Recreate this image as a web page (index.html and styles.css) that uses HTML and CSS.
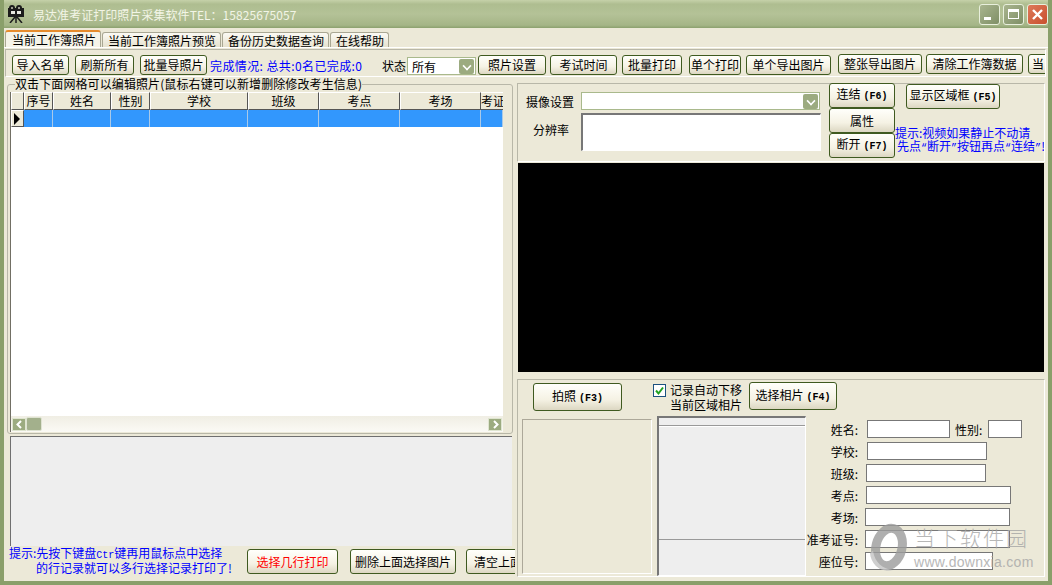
FILE: index.html
```html
<!DOCTYPE html>
<html lang="zh-CN">
<head>
    <meta charset="UTF-8">
    <title>易达准考证打印照片采集软件</title>
    <link rel="stylesheet" href="styles.css">
</head>
<body>
<div class="window">
    <div class="titlebar">
        <svg class="app-icon" width="16" height="18" viewBox="0 0 16 18">
            <rect x="0" y="3" width="16" height="9" fill="#1c1c1c"/>
            <circle cx="4" cy="3" r="3" fill="#1c1c1c"/>
            <circle cx="11" cy="3" r="3" fill="#1c1c1c"/>
            <circle cx="4" cy="3" r="1" fill="#c8c8b8"/>
            <circle cx="11" cy="3" r="1" fill="#c8c8b8"/>
            <rect x="3" y="6" width="4" height="3" fill="#e8e8e0"/>
            <rect x="9" y="6" width="4" height="3" fill="#e8e8e0"/>
            <path d="M7 12 L2 18 M8 12 V18 M9 12 L14 18" stroke="#1c1c1c" stroke-width="1.5"/>
        </svg>
        <span class="title-text">易达准考证打印照片采集软件TEL：15825675057</span>
        <div class="win-btns">
            <div class="win-btn"><span class="glyph-min"></span></div>
            <div class="win-btn"><span class="glyph-max"></span></div>
            <div class="win-btn close">
                <svg width="13" height="13" viewBox="0 0 13 13"><path d="M2 2 L11 11 M11 2 L2 11" stroke="#fff" stroke-width="2.4"/></svg>
            </div>
        </div>
    </div>

    <div class="client">
        <div class="tabs">
            <div class="tab active">当前工作簿照片</div>
            <div class="tab">当前工作簿照片预览</div>
            <div class="tab">备份历史数据查询</div>
            <div class="tab">在线帮助</div>
        </div>

        <div class="toolbar">
            <button class="btn w57">导入名单</button>
            <button class="btn w59 ml6">刷新所有</button>
            <button class="btn w67 ml6">批量导照片</button>
            <span class="status-text">完成情况: 总共:0名已完成:0</span>
            <span class="state-label">状态</span>
            <div class="combo state-combo"><span>所有</span><i class="combo-arrow"></i></div>
            <button class="btn w68 ml2">照片设置</button>
            <button class="btn w67 ml4">考试时间</button>
            <button class="btn w60 ml5">批量打印</button>
            <button class="btn w52 ml7">单个打印</button>
            <button class="btn w85 ml5">单个导出图片</button>
            <button class="btn w84 ml7 up1">整张导出图片</button>
            <button class="btn w97 ml4 up1">清除工作簿数据</button>
            <button class="btn w22 ml5 up1 clip-text">当</button>
        </div>

        <div class="main">
            <div class="left">
                <fieldset class="group">
                    <legend>双击下面网格可以编辑照片(鼠标右键可以新增删除修改考生信息)</legend>
                    <div class="grid-wrap">
                        <div class="grid-head">
                            <div></div><div>序号</div><div>姓名</div><div>性别</div><div>学校</div><div>班级</div><div>考点</div><div>考场</div><div>考证</div>
                        </div>
                        <div class="grid-row">
                            <div class="row-mark"><i></i></div><div></div><div></div><div></div><div></div><div></div><div></div><div></div><div></div>
                        </div>
                        <div class="grid-empty"></div>
                        <div class="hscroll">
                            <div class="sb-btn"><svg width="9" height="9" viewBox="0 0 9 9"><path d="M6 1 L2.5 4.5 L6 8" fill="none" stroke="#fff" stroke-width="2"/></svg></div>
                            <div class="sb-thumb"></div>
                            <div class="sb-btn"><svg width="9" height="9" viewBox="0 0 9 9"><path d="M3 1 L6.5 4.5 L3 8" fill="none" stroke="#fff" stroke-width="2"/></svg></div>
                        </div>
                    </div>
                </fieldset>
                <div class="gray-panel"></div>
                <div class="left-bottom">
                    <div class="tip-left">
                        <div>提示:先按下键盘<span class="latin">Ctr</span>键再用鼠标点中选择</div>
                        <div class="tip-indent">的行记录就可以多行选择记录打印了!</div>
                    </div>
                    <button class="btn red w91">选择几行打印</button>
                    <button class="btn w106 ml12">删除上面选择图片</button>
                    <button class="btn w106 ml10 clip-left">清空上面选择图片</button>
                </div>
            </div>

            <div class="right">
                <div class="cam-panel">
                    <div class="cam-fields">
                        <div class="cam-row">
                            <span class="cam-label">摄像设置</span>
                            <div class="combo cam-combo"><span></span><i class="combo-arrow"></i></div>
                        </div>
                        <div class="cam-row res-row">
                            <span class="cam-label res-label">分辨率</span>
                            <div class="res-list"></div>
                        </div>
                    </div>
                    <div class="cam-btns">
                        <button class="btn cam-btn">连结<span class="key">(F6)</span></button>
                        <button class="btn cam-btn">属性</button>
                        <button class="btn cam-btn">断开<span class="key">(F7)</span></button>
                    </div>
                    <div class="cam-side">
                        <button class="btn area-btn">显示区域框<span class="key">(F5)</span></button>
                        <div class="tip-right">
                            <div>提示:视频如果静止不动请</div>
                            <div class="tip-second">先点<span class="latin">“</span>断开<span class="latin">”</span>按钮再点<span class="latin">“</span>连结<span class="latin">”</span>!</div>
                        </div>
                    </div>
                </div>

                <div class="video"></div>

                <div class="shot-panel">
                    <div class="shot-top">
                        <button class="btn shot-btn">拍照<span class="key">(F3)</span></button>
                        <label class="auto-check">
                            <span class="check-box"><svg width="11" height="11" viewBox="0 0 11 11"><path d="M2 5.5 L4.5 8.5 L9 2.5" fill="none" stroke="#21a121" stroke-width="2"/></svg></span>
                            <span class="check-text">记录自动下移<br>当前区域相片</span>
                        </label>
                        <button class="btn pick-btn">选择相片<span class="key">(F4)</span></button>
                    </div>
                    <div class="shot-body">
                        <div class="preview"></div>
                        <div class="thumbs">
                            <div class="thumbs-head"></div>
                            <div class="thumbs-main"></div>
                        </div>
                        <div class="info-form">
                            <div class="form-row">
                                <span class="f-label l1">姓名:</span><span class="f-input i83"></span>
                                <span class="f-label sex">性别:</span><span class="f-input i34"></span>
                            </div>
                            <div class="form-row"><span class="f-label l1">学校:</span><span class="f-input i120"></span></div>
                            <div class="form-row"><span class="f-label l1">班级:</span><span class="f-input i120 nudge"></span></div>
                            <div class="form-row"><span class="f-label l1">考点:</span><span class="f-input i145 nudge"></span></div>
                            <div class="form-row"><span class="f-label l1">考场:</span><span class="f-input i145 nudge2"></span></div>
                            <div class="form-row"><span class="f-label l1">准考证号:</span><span class="f-input i145 nudge2"></span></div>
                            <div class="form-row"><span class="f-label l1">座位号:</span><span class="f-input i128 nudge2"></span></div>
                        </div>
                    </div>
                </div>
            </div>
        </div>
    </div>

    <div class="watermark">
        <svg class="wm-logo" width="42" height="50" viewBox="0 0 42 50">
            <ellipse cx="22" cy="24" rx="13" ry="19" fill="none" stroke="#9c9c9c" stroke-width="9" transform="rotate(14 22 24)"/>
            <path d="M3 30 C4 42 14 50 26 47 C16 46 8 40 6 28 Z" fill="#c4c4c4"/>
        </svg>
        <div class="wm-text">
            <div class="wm-cn">当下软件园</div>
            <div class="wm-url">www.downxia.com</div>
        </div>
    </div>
</div>
</body>
</html>
```

FILE: styles.css
```css
* {
    box-sizing: border-box;
}

body {
    margin: 0;
    font-family: "Noto Sans CJK SC", sans-serif;
    font-size: 12px;
    color: #000;
    overflow: hidden;
    background: #ece9d8;
}

.window {
    position: relative;
    width: 1052px;
    height: 585px;
    display: flex;
    flex-direction: column;
    background: #ece9d8;
    border: 4px solid #8a9f6a;
    border-top: 0;
    overflow: hidden;
}

/* title bar */
.titlebar {
    height: 28px;
    margin: 0 -4px;
    padding: 0 4px 0 8px;
    display: flex;
    align-items: center;
    flex: none;
    background: linear-gradient(#c5d1a9 0, #aebd90 15%, #b4c297 50%, #a5b587 90%, #8ba06e 100%);
}

.app-icon {
    flex: none;
}

.title-text {
    margin-left: 9px;
    color: #f2f5e6;
    font-size: 12px;
    letter-spacing: 0.05px;
}

.win-btns {
    margin-left: auto;
    display: flex;
    gap: 3px;
}

.win-btn {
    width: 21px;
    height: 21px;
    display: flex;
    align-items: center;
    justify-content: center;
    border: 1px solid #e8efdc;
    border-radius: 3px;
    background: linear-gradient(135deg, #a9b58f, #7f8f66);
}

.win-btn.close {
    background: linear-gradient(135deg, #dd7a5a, #c94f2e);
}

.glyph-min {
    width: 7px;
    height: 3px;
    margin-top: 9px;
    margin-right: 5px;
    background: #fff;
}

.glyph-max {
    width: 11px;
    height: 10px;
    border: 1px solid #fff;
    border-top-width: 3px;
}

.client {
    flex: 1;
    min-height: 0;
    display: flex;
    flex-direction: column;
    padding-bottom: 3px;
}

/* tabs */
.tabs {
    height: 20px;
    padding: 4px 0 0 1px;
    display: flex;
    align-items: flex-end;
    flex: none;
    border-bottom: 1px solid #fff;
}

.tab {
    height: 15px;
    padding: 0 4px 0 5px;
    margin-right: 1px;
    display: flex;
    align-items: center;
    line-height: 15px;
    white-space: nowrap;
    background: linear-gradient(#fbfaf4, #e6e2cf);
    border: 1px solid #a9a793;
    border-bottom: 0;
    border-radius: 3px 3px 0 0;
}

.tab.active {
    height: 17px;
    padding: 0 4px 0 6px;
    background: #f5f3e8;
    border-top: 2px solid #e68b2c;
}

/* toolbar */
.toolbar {
    height: 28px;
    margin: 1px 2px 0 1px;
    padding: 5px 0 0 6px;
    display: flex;
    align-items: flex-start;
    flex: none;
    border: 1px solid #b8b7a8;
    border-right-color: #fff;
    border-bottom-color: #fff;
    white-space: nowrap;
    overflow: hidden;
}

.btn {
    height: 20px;
    padding: 0;
    flex: none;
    font-family: inherit;
    font-size: 12px;
    line-height: 16px;
    color: #000;
    white-space: nowrap;
    background: linear-gradient(#fffffb 0, #f5f2e4 60%, #dcd7c2 100%);
    border: 1px solid #3f5a20;
    border-radius: 3px;
}

.btn.red {
    color: #f00;
}

.w22 { width: 22px; }
.w52 { width: 52px; }
.w57 { width: 57px; }
.w59 { width: 59px; }
.w60 { width: 60px; }
.w67 { width: 67px; }
.w68 { width: 68px; }
.w84 { width: 84px; }
.w85 { width: 85px; }
.w91 { width: 91px; }
.w97 { width: 97px; }
.w106 { width: 106px; }

.ml2 { margin-left: 2px; }
.ml4 { margin-left: 4px; }
.ml5 { margin-left: 5px; }
.ml6 { margin-left: 6px; }
.ml7 { margin-left: 7px; }
.ml10 { margin-left: 10px; }
.ml12 { margin-left: 12px; }

.up1 {
    margin-top: -1px;
}

.clip-text {
    text-align: left;
    padding-left: 3px;
    overflow: hidden;
}

.status-text {
    width: 172px;
    flex: none;
    margin-left: 3px;
    line-height: 22px;
    letter-spacing: 0.4px;
    color: #00f;
}

.state-label {
    flex: none;
    line-height: 22px;
}

.combo {
    height: 18px;
    display: flex;
    align-items: center;
    justify-content: space-between;
    padding: 0 1px 0 4px;
    background: #fff;
    border: 1px solid #a9b98c;
}

.state-combo {
    width: 69px;
    flex: none;
    margin: 2px 0 0 1px;
}

.combo-arrow {
    width: 15px;
    height: 15px;
    position: relative;
    background: #9cab80;
    border-radius: 2px;
}

.combo-arrow::after {
    content: "";
    position: absolute;
    left: 4px;
    top: 3px;
    width: 6px;
    height: 6px;
    border-right: 2px solid #fff;
    border-bottom: 2px solid #fff;
    transform: rotate(45deg) scale(0.8);
}

/* main area */
.main {
    flex: 1;
    min-height: 0;
    display: flex;
}

.left {
    width: 513px;
    flex: none;
    display: flex;
    flex-direction: column;
    overflow: hidden;
}

.group {
    height: 356px;
    margin: 1px 0 0 3px;
    width: 506px;
    padding: 0 2px;
    min-width: 0;
    flex: none;
    border: 1px solid #b8b7a8;
    border-radius: 3px;
}

.group legend {
    padding: 0;
    margin-left: 5px;
    line-height: 12px;
    height: 12px;
    letter-spacing: 0.1px;
    white-space: nowrap;
}

.grid-wrap {
    width: 493px;
    height: 340px;
    margin-top: 2px;
    display: flex;
    flex-direction: column;
    background: #fff;
    border-left: 1px solid #716f64;
}

.grid-head,
.grid-row {
    display: grid;
    grid-template-columns: 13px 29px 58px 39px 98px 71px 81px 81px 22px;
    flex: none;
}

.grid-head {
    height: 18px;
}

.grid-head div {
    text-align: center;
    line-height: 16px;
    white-space: nowrap;
    background: #ece9d8;
    overflow: hidden;
    border-top: 1px solid #fff;
    border-left: 1px solid #fff;
    border-right: 1px solid #555;
    border-bottom: 1px solid #555;
}

.grid-head div:last-child {
    text-align: left;
    border-right: 0;
    border-left: 0;
}

.grid-row {
    height: 17px;
}

.grid-row div {
    background: #3297fd;
    border-right: 1px solid #a9c9e8;
}

.grid-row .row-mark {
    display: flex;
    align-items: center;
    background: #ece9d8;
    border-top: 1px solid #fff;
    border-left: 1px solid #fff;
    border-right: 1px solid #555;
    border-bottom: 1px solid #555;
    padding-left: 2px;
}

.row-mark i {
    width: 0;
    height: 0;
    border-left: 6px solid #000;
    border-top: 6px solid transparent;
    border-bottom: 6px solid transparent;
}

.grid-empty {
    flex: 1;
}

.hscroll {
    height: 16px;
    flex: none;
    display: flex;
    align-items: center;
    padding: 0 1px;
    background: linear-gradient(#f0eee4, #fbfaf5);
}

.sb-btn {
    width: 14px;
    height: 13px;
    display: flex;
    align-items: center;
    justify-content: center;
    background: #9cab80;
    border: 1px solid #dfe5d0;
}

.sb-thumb {
    width: 16px;
    height: 14px;
    margin-right: auto;
    background: #a3b08c;
    border: 1px solid #dfe3d2;
    border-radius: 2px;
}

.gray-panel {
    height: 110px;
    width: 502px;
    margin: 2px 0 0 6px;
    flex: none;
    background: #eee;
    border-top: 1px solid #6f6f6f;
    border-left: 1px solid #6f6f6f;
}

.left-bottom {
    width: 511px;
    height: 31px;
    display: flex;
    align-items: flex-start;
    padding-left: 5px;
    overflow: hidden;
}

.tip-left {
    width: 238px;
    flex: none;
    color: #00f;
    line-height: 13px;
}

.tip-indent {
    padding-left: 27px;
}

.latin {
    font-family: "Liberation Mono", monospace;
    font-size: 10px;
    line-height: 1;
}

.left-bottom .btn {
    height: 25px;
    margin-top: 3px;
}

.clip-left {
    text-align: left;
    padding-left: 7px;
}

/* right column */
.right {
    width: 528px;
    flex: none;
    margin-top: 6px;
    display: flex;
    flex-direction: column;
}

.cam-panel {
    height: 79px;
    display: flex;
    border: 1px solid #fff;
    border-top-color: #b8b7a8;
    border-left-color: #b8b7a8;
}

.cam-fields {
    width: 311px;
    flex: none;
}

.cam-row {
    display: flex;
    align-items: center;
}

.cam-row:first-child {
    margin-top: 8px;
}

.res-row {
    margin-top: 3px;
    align-items: flex-start;
}

.cam-label {
    width: 63px;
    flex: none;
    padding-left: 8px;
    white-space: nowrap;
}

.res-label {
    padding-left: 15px;
    margin-top: 8px;
}

.cam-combo {
    width: 239px;
}

.res-list {
    width: 240px;
    height: 38px;
    background: #fff;
    border: 1px solid #fff;
    border-top: 2px solid #777;
    border-left: 2px solid #777;
}

.cam-btns {
    width: 66px;
    flex: none;
    display: flex;
    flex-direction: column;
    margin-top: -1px;
}

.cam-btn {
    width: 66px;
    height: 25px;
}

.key {
    font-family: "Liberation Mono", monospace;
    font-size: 10px;
    font-weight: bold;
    margin-left: 3px;
}

.cam-side {
    flex: 1;
    min-width: 0;
    overflow: hidden;
}

.area-btn {
    width: 94px;
    height: 25px;
    margin-left: 11px;
}

.tip-right {
    margin-top: 17px;
    color: #00f;
    line-height: 13px;
    white-space: nowrap;
}

.tip-second {
    padding-left: 2px;
}

.video {
    height: 209px;
    margin: 1px 1px 0 1px;
    flex: none;
    background: #000;
}

.shot-panel {
    height: 198px;
    margin-top: 7px;
    flex: none;
    border: 1px solid #fff;
    border-top-color: #b8b7a8;
    border-left-color: #b8b7a8;
}

.shot-top {
    height: 38px;
    padding-top: 3px;
    display: flex;
    align-items: flex-start;
}

.shot-btn {
    width: 89px;
    height: 28px;
    margin-left: 15px;
}

.auto-check {
    display: flex;
    margin: -1px 0 0 31px;
    line-height: 15px;
}

.check-box {
    width: 13px;
    height: 13px;
    margin-top: 2px;
    display: flex;
    align-items: center;
    justify-content: center;
    background: #fff;
    border: 1px solid #1c5180;
}

.check-text {
    margin-left: 4px;
    white-space: nowrap;
}

.pick-btn {
    width: 88px;
    height: 28px;
    margin-left: 7px;
    margin-top: -1px;
}

.shot-body {
    display: flex;
    align-items: flex-start;
}

.preview {
    width: 130px;
    height: 155px;
    margin: 1px 0 0 4px;
    border: 1px solid #fff;
    border-top-color: #aca899;
    border-left-color: #aca899;
}

.thumbs {
    width: 149px;
    height: 160px;
    margin: -2px 0 0 5px;
    display: flex;
    flex-direction: column;
    background: #eee;
    border: 1px solid #fff;
    border-top: 2px solid #777;
    border-left: 2px solid #777;
}

.thumbs-head {
    height: 8px;
    border-bottom: 1px solid #999;
}

.thumbs-main {
    height: 114px;
    border-top: 1px solid #fff;
    border-bottom: 1px solid #999;
}

.info-form {
    margin: 2px 0 0 0;
    display: flex;
    flex-direction: column;
    gap: 4px;
}

.form-row {
    height: 18px;
    display: flex;
    align-items: center;
}

.f-label {
    white-space: nowrap;
}

.l1 {
    width: 61px;
    flex: none;
    text-align: right;
    padding-right: 9px;
}

.sex {
    margin-left: 5px;
    width: 33px;
}

.f-input {
    height: 18px;
    flex: none;
    background: #fff;
    border: 1px solid #777;
}

.nudge { margin-left: -1px; }
.nudge2 { margin-left: -2px; }

.i34 { width: 34px; }
.i83 { width: 83px; }
.i120 { width: 120px; }
.i128 { width: 128px; }
.i145 { width: 145px; }

/* site watermark over the screenshot */
.watermark {
    position: absolute;
    left: 863px;
    top: 523px;
    display: flex;
    gap: 5px;
    opacity: 0.8;
    pointer-events: none;
}

.wm-text {
    white-space: nowrap;
}

.wm-cn {
    font-size: 21px;
    line-height: 28px;
    letter-spacing: 2px;
    color: #a6a6a6;
    font-weight: 300;
}

.wm-url {
    margin-top: 3px;
    font-family: "Liberation Sans", sans-serif;
    font-size: 14px;
    line-height: 16px;
    color: #a6a6a6;
    letter-spacing: 0.3px;
}
```
